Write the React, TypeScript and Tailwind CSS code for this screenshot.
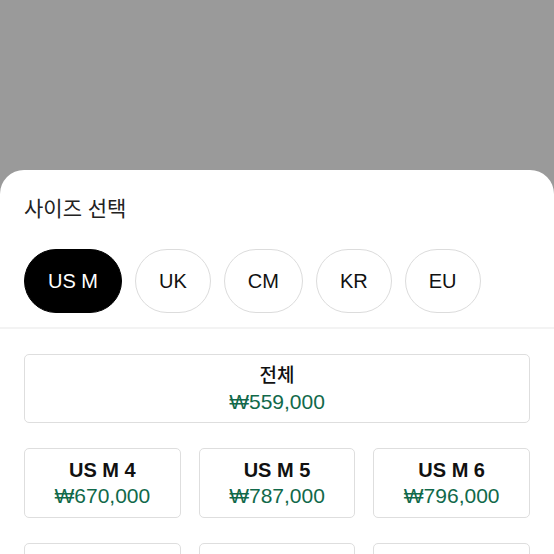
import React, { useState } from 'react';

const units = ['US M', 'UK', 'CM', 'KR', 'EU'];

const sizes = [
  { label: 'US M 4', price: '₩670,000' },
  { label: 'US M 5', price: '₩787,000' },
  { label: 'US M 6', price: '₩796,000' },
  { label: 'US M 7', price: '₩540,000' },
  { label: 'US M 8', price: '₩559,000' },
  { label: 'US M 9', price: '₩600,000' },
];

export default function App() {
  const [unit, setUnit] = useState('US M');

  return (
    <div
      className="w-[554px] h-[554px] overflow-hidden bg-[#9a9a9a] flex flex-col"
      style={{ fontFamily: '"Liberation Sans", "Noto Sans CJK KR", sans-serif' }}
    >
      <div className="h-[170px] shrink-0" />
      <div className="flex-1 bg-white rounded-t-[24px]">
        {/* Header */}
        <div className="px-6 pt-[25px] pb-[14px] border-b-2 border-[#f3f3f3]">
          <h2 className="text-[21px] leading-[28px] text-[#222]">사이즈 선택</h2>
          <div className="flex gap-[13px] mt-[26px]">
            {units.map((u) => (
              <button
                key={u}
                onClick={() => setUnit(u)}
                className={`h-16 px-[23px] rounded-full text-[20px] ${
                  unit === u
                    ? 'bg-black text-white border border-black'
                    : 'bg-white text-[#111] border border-[#dcdcdc]'
                }`}
              >
                {u}
              </button>
            ))}
          </div>
        </div>

        {/* Size list */}
        <div className="px-6 pt-[25px] flex flex-col gap-[25px]">
          <div className="h-[69px] border border-[#dedede] rounded-[5px] flex flex-col items-center justify-center">
            <span className="text-[19px] leading-[26px] font-medium text-[#111]">전체</span>
            <span className="text-[21px] leading-[26px] text-[#11694a]">₩559,000</span>
          </div>
          <div className="grid grid-cols-3 gap-x-[18px] gap-y-[25px]">
            {sizes.map((s) => (
              <div
                key={s.label}
                className="h-[70px] border border-[#dedede] rounded-[5px] flex flex-col items-center justify-center"
              >
                <span className="text-[20px] leading-[26px] font-bold text-[#111]">{s.label}</span>
                <span className="text-[21px] leading-[26px] text-[#11694a]">{s.price}</span>
              </div>
            ))}
          </div>
        </div>
      </div>
    </div>
  );
}
